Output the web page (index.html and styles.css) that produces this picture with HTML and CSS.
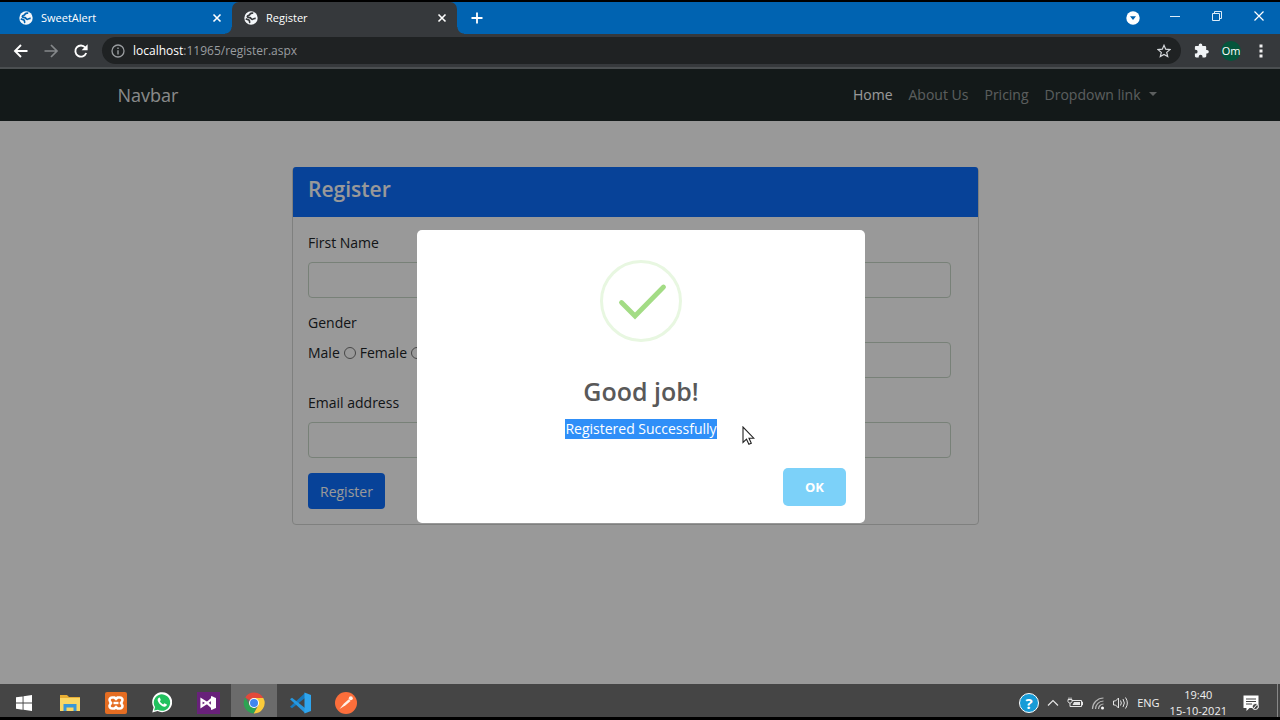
FILE: index.html
```html
<!DOCTYPE html>
<html lang="en">
<head>
<meta charset="utf-8">
<meta name="viewport" content="width=device-width, initial-scale=1">
<title>Register</title>
<link rel="stylesheet" href="styles.css">
</head>
<body>

<svg class="defs" width="0" height="0">
  <symbol id="globe" viewBox="0 0 14 14">
    <circle cx="7" cy="7" r="6.700" fill="#f4f7fa"/>
    <path class="land" d="M9.300 2.300c-1.600-.5-3.300.2-3.500 1.300-.1.900-2.300.6-2.500 1.900-.1 1.100 1.500 1 2.600 1.200 1.200.2 1 1.500 2.200 1.600 1.300.1 1.500-1.100 3.600-1"/>
    <path class="land" d="M1.900 7.600c1.200 1.400 2.700.7 3.300 1.700.6.900-.2 1.500.9 2.500"/>
  </symbol>
</svg>

<div class="tabs">
  <div class="tab">
    <svg width="14" height="14"><use href="#globe"/></svg>
    <span>SweetAlert</span>
    <button class="tab-close" aria-label="Close tab"><svg width="10" height="10" viewBox="0 0 10 10"><path d="M1.500 1.500l7 7M8.500 1.500l-7 7" stroke="#fff" stroke-width="1.600"/></svg></button>
  </div>
  <div class="tab active">
    <svg width="14" height="14"><use href="#globe"/></svg>
    <span>Register</span>
    <button class="tab-close" aria-label="Close tab"><svg width="10" height="10" viewBox="0 0 10 10"><path d="M1.500 1.500l7 7M8.500 1.500l-7 7" stroke="#fff" stroke-width="1.600"/></svg></button>
  </div>
  <button class="new-tab" aria-label="New tab"><svg width="12" height="12" viewBox="0 0 12 12"><path d="M6 .5v11M.5 6h11" stroke="#fff" stroke-width="1.800"/></svg></button>
  <div class="window-buttons">
    <button aria-label="Search tabs"><svg width="14" height="18" viewBox="0 0 14 18"><circle cx="7" cy="11" r="6.700" fill="#fff"/><path d="M4 9.300h6L7 13z" fill="#0063b1"/></svg></button>
    <button aria-label="Minimize"><svg width="10" height="10" viewBox="0 0 10 10"><path d="M0 5.500h10" stroke="#dcecf8"/></svg></button>
    <button aria-label="Restore"><svg width="10" height="10" viewBox="0 0 10 10"><path d="M.5 2.500h7v7h-7zM2.500 2.500v-2h7v7h-2" fill="none" stroke="#dcecf8"/></svg></button>
    <button aria-label="Close"><svg width="10" height="10" viewBox="0 0 10 10"><path d="M.5.5l9 9M9.500.5l-9 9" stroke="#fff" stroke-width="1.200"/></svg></button>
  </div>
</div>

<div class="toolbar">
  <button aria-label="Back"><svg width="16" height="16" viewBox="0 0 16 16"><path d="M14.500 8H2M8 2L2 8l6 6" fill="none" stroke="#fff" stroke-width="1.900"/></svg></button>
  <button aria-label="Forward"><svg width="16" height="16" viewBox="0 0 16 16"><path d="M1.500 8H14M8 2l6 6-6 6" fill="none" stroke="#85888b" stroke-width="1.700"/></svg></button>
  <button aria-label="Reload"><svg width="16" height="16" viewBox="0 0 16 16"><path d="M13.200 10A5.600 5.600 0 1 1 12.300 4.500" fill="none" stroke="#fff" stroke-width="1.900"/><path d="M14.600 1.200v6H8.600z" fill="#fff"/></svg></button>
  <div class="address">
    <svg width="14" height="14" viewBox="0 0 14 14"><circle cx="7" cy="7" r="6" fill="none" stroke="#9a9da0" stroke-width="1.300"/><path d="M7 6.200v4.300M7 3.500v1.400" stroke="#9a9da0" stroke-width="1.400"/></svg>
    <span class="url"><b>localhost</b>:11965/register.aspx</span>
    <button class="star" aria-label="Bookmark"><svg width="14" height="14" viewBox="0 0 14 14"><path d="M7 1.300l1.700 3.900 4.200.4-3.200 2.800 1 4.200L7 10.400l-3.700 2.200 1-4.200L1.100 5.600l4.200-.4z" fill="none" stroke="#d6d9dc" stroke-width="1.200"/></svg></button>
  </div>
  <button aria-label="Extensions"><svg width="15" height="15" viewBox="0 0 15 15"><path d="M13 7h-.8V4.300c0-.8-.6-1.300-1.300-1.300H8.300v-.700a1.800 1.800 0 0 0-3.600 0V3H2.200C1.400 3 .9 3.500.9 4.300v2.500h.8a1.900 1.900 0 0 1 0 3.800H.9v2.500c0 .8.6 1.300 1.300 1.300h2.500v-.800a1.900 1.900 0 0 1 3.800 0v.8H11c.700 0 1.300-.6 1.300-1.300v-2.500h.7A1.800 1.800 0 0 0 13 7z" fill="#f0f3f6"/></svg></button>
  <button class="avatar" aria-label="Profile">Om</button>
  <button aria-label="Menu"><svg width="4" height="14" viewBox="0 0 4 14"><path d="M.5.5h3v3h-3zM.5 5.500h3v3h-3zM.5 10.500h3v3h-3z" fill="#f0f0f0"/></svg></button>
</div>

<div class="viewport">
  <nav class="navbar">
    <div class="container">
      <a class="navbar-brand" href="#">Navbar</a>
      <a class="nav-link current" href="#">Home</a>
      <a class="nav-link" href="#">About Us</a>
      <a class="nav-link" href="#">Pricing</a>
      <a class="nav-link dropdown" href="#">Dropdown link</a>
    </div>
  </nav>

  <main>
    <form class="card">
      <h4>Register</h4>
      <div class="card-body">
        <div class="row">
          <div class="field">
            <label for="fname">First Name</label>
            <input type="text" id="fname" name="fname">
          </div>
          <div class="field">
            <input type="text" name="lname" aria-label="Last Name">
          </div>
          <div class="field">
            <span class="label">Gender</span>
            <div class="radios">
              <label for="male">Male</label> <input type="radio" id="male" name="gender">
              <label for="female">Female</label> <input type="radio" id="female" name="gender">
            </div>
          </div>
          <div class="field">
            <input type="text" name="phone" aria-label="Phone">
          </div>
          <div class="field">
            <label for="email">Email address</label>
            <input type="email" id="email" name="email">
          </div>
          <div class="field">
            <input type="password" name="psw" aria-label="Password">
          </div>
        </div>
        <button type="submit" class="registerbtn">Register</button>
      </div>
    </form>
  </main>

  <!-- alert shown after sign up -->
  <div class="overlay">
    <div class="modal" role="dialog" aria-labelledby="modal-title">
      <svg class="modal-icon" width="82" height="82" viewBox="0 0 82 82">
        <circle cx="41" cy="41" r="39.500" fill="none" stroke="#e8f7e1" stroke-width="3"/>
        <path d="M21.500 42.500L35 56l28.500-29" fill="none" stroke="#a3dc85" stroke-width="4.800" stroke-linecap="round"/>
      </svg>
      <h2 id="modal-title">Good job!</h2>
      <p><span class="selected">Registered Successfully</span></p>
      <div class="modal-footer">
        <button class="okbtn">OK</button>
      </div>
      <svg class="cursor" width="13" height="20" viewBox="0 0 13 20"><path d="M1 1v15.500l3.500-3.300 2.400 5.100 2.400-1.100-2.300-5h4.800z" fill="#fff" stroke="#222" stroke-width="1.100"/></svg>
    </div>
  </div>
</div>

<div class="taskbar">
  <button class="start" aria-label="Start"><svg width="16" height="16" viewBox="0 0 16 16"><path d="M0 2.300L6.600 1.400v6.200H0zM7.500 1.300L16 .1v7.500H7.500zM0 8.500h6.600v6.200L0 13.800zM7.500 8.500H16V16l-8.500-1.200z" fill="#fff"/></svg></button>
  <button aria-label="File Explorer"><svg width="20" height="18" viewBox="0 0 20 18"><path d="M0 1h7l2 2h11v14H0z" fill="#e8ae34"/><path d="M0 4h20v13H0z" fill="#fbd765"/><path d="M3.500 10h13v7h-3v-3.500h-7V17h-3z" fill="#3b97d8"/></svg></button>
  <button aria-label="XAMPP"><svg width="22" height="22" viewBox="0 0 22 22"><rect width="22" height="22" rx="2" fill="#e56d22"/><path d="M7 5.500h2.500L11 7l1.500-1.500H15a2.500 2.500 0 0 1 2 4L16 11l1 1.500a2.500 2.500 0 0 1-2 4h-2.500L11 15l-1.500 1.500H7a2.500 2.500 0 0 1-2-4L6 11 5 9.500a2.500 2.500 0 0 1 2-4z" fill="none" stroke="#fff" stroke-width="2.600"/><path d="M8.500 11h5" stroke="#fff" stroke-width="2.400"/></svg></button>
  <button aria-label="WhatsApp"><svg width="20" height="21" viewBox="0 0 20 21"><path d="M.3 20.500l1.300-5.200A10 10 0 1 1 5.500 19z" fill="#fff"/><path d="M2.100 18.600l1-3.500A8.200 8.200 0 1 1 5.900 17.700z" fill="#22c15e"/><path d="M6.900 5.700c-1.400.8-1.600 2.400-.7 4 1.500 2.800 3.500 4.500 6 5 1.500.2 2.600-.7 2.700-2.200l-2.500-1.300-1.200 1.300c-1.600-.7-2.600-1.800-3.300-3.200l.9-1.200-1-2.500z" fill="#fff"/></svg></button>
  <button aria-label="Visual Studio"><svg width="23" height="22" viewBox="0 0 23 22"><rect width="23" height="22" fill="#68217a"/><path d="M4.500 7.500v7l5.500-3.700 5 4.400V6.600l-5 4.400z" fill="none" stroke="#fff" stroke-width="2.200"/><path d="M14 4l5 2v10l-5 2z" fill="#fff"/></svg></button>
  <button class="running" aria-label="Chrome"><svg width="22" height="22" viewBox="0 0 22 22"><path d="M11 11L2.200 5.500A10.400 10.400 0 0 1 20.300 6H11z" fill="#e2493b"/><path d="M11 6h9.300A10.400 10.400 0 0 1 10.600 21.400L15.300 13.500z" fill="#fbcb3a"/><path d="M2.200 5.500L6.700 13.500 11 16l2.500-.3-2.900 5.700A10.400 10.400 0 0 1 2.200 5.500z" fill="#2da352"/><circle cx="11" cy="11" r="5" fill="#fff"/><circle cx="11" cy="11" r="4" fill="#3f85ee"/></svg></button>
  <button aria-label="VS Code"><svg width="22" height="22" viewBox="0 0 22 22"><path d="M16 1v5L3 16.300 1 14.700z" fill="#1679bd"/><path d="M16 21v-5L3 5.700 1 7.300z" fill="#2798df"/><path d="M15.500.5L22 3v16l-6.500 2.500z" fill="#2fa5ed"/></svg></button>
  <button aria-label="Postman"><svg width="22" height="22" viewBox="0 0 22 22"><circle cx="11" cy="11" r="11" fill="#fb6e3b"/><path d="M4.500 17l4.500-5.500 4.800-4.300 1.800 1.700-5 4.400z" fill="#fff1e8"/><circle cx="15.800" cy="6.300" r="2" fill="#fff1e8"/></svg></button>

  <div class="tray">
    <button class="help" aria-label="Help">?</button>
    <svg width="12" height="12" viewBox="0 0 12 12"><path d="M1 8.500l5-5 5 5" fill="none" stroke="#e4e4e4" stroke-width="1.200"/></svg>
    <svg width="16" height="12" viewBox="0 0 16 12"><path d="M5 3.500h9.500v6H4M14.500 5h1v3h-1" fill="none" stroke="#e4e4e4"/><path d="M7 5h6v3H5.500z" fill="#e4e4e4"/><path d="M1 2.500h4v2.200L3.800 6H2.200L1 4.700zM2 .5v2M4 .5v2M3 6v3.500h2" fill="none" stroke="#e4e4e4"/></svg>
    <svg width="14" height="14" viewBox="0 0 14 14"><path d="M1.500 13A11 11 0 0 1 12.500 2M4.500 13a8 8 0 0 1 8-8M7.500 13a5 5 0 0 1 5-5" fill="none" stroke="#b5b5b5" stroke-width="1.200"/><circle cx="11.500" cy="12" r="1.500" fill="#fff"/></svg>
    <svg width="16" height="14" viewBox="0 0 16 14"><path d="M.5 5h2l3-3v10l-3-3h-2zM7.500 4.500q1.700 2.500 0 5M10 3q2.700 4 0 8M12.500 1.500q3.700 5.500 0 11" fill="none" stroke="#e4e4e4"/></svg>
    <span>ENG</span>
    <div class="clock">19:40<br>15-10-2021</div>
    <svg width="16" height="16" viewBox="0 0 16 16"><path d="M.5.5h15V13H6.500L3.500 16v-3h-3z" fill="#fff"/><path d="M3 4h10M3 6.500h10M3 9h6" stroke="#444"/><circle cx="12.300" cy="11.500" r="3" fill="#444" stroke="#fff"/><path d="M10.500 13.500l3.500-4" stroke="#fff"/></svg>
  </div>
</div>

</body>
</html>
```

FILE: styles.css
```css
* {
  box-sizing: border-box;
}

body {
  margin: 0;
  min-height: 100vh;
  display: flex;
  flex-direction: column;
  border-top: 2px solid #000;
  border-bottom: 3px solid #000;
  background: #000;
  font-family: "Open Sans", "Noto Sans", sans-serif;
  font-size: 14px;
  line-height: 22px;
}

button {
  border: none;
  padding: 0;
  background: none;
  color: white;
  font-family: inherit;
}

a {
  text-decoration: none;
}

svg {
  display: block;
  flex-shrink: 0;
}

.defs {
  position: absolute;
}

/* browser tabs */
.tabs {
  --tab-color: #0063b1;
  display: flex;
  height: 32px;
  background: #0063b1;
  color: white;
  font-size: 11px;
}

.tab {
  position: relative;
  display: flex;
  align-items: center;
  gap: 8px;
  width: 225px;
  padding: 0 10px 0 12px;
}

.tab:first-child {
  width: 232px;
  padding-left: 19px;
}

.tab.active {
  --tab-color: #36393c;
  background: #36393c;
  border-radius: 7px 7px 0 0;
}

.tab.active::before,
.tab.active::after {
  content: "";
  position: absolute;
  bottom: 0;
  width: 7px;
  height: 7px;
}

.tab.active::before {
  left: -7px;
  background: radial-gradient(circle at 0 0, transparent 6px, #36393c 7px);
}

.tab.active::after {
  right: -7px;
  background: radial-gradient(circle at 100% 0, transparent 6px, #36393c 7px);
}

.land {
  fill: none;
  stroke: var(--tab-color);
  stroke-width: 1.7;
}

.tab-close {
  margin-left: auto;
}

.new-tab {
  width: 40px;
  display: grid;
  place-items: center;
}

.window-buttons {
  display: flex;
  margin-left: auto;
  height: 27px;
}

.window-buttons button {
  width: 42px;
  display: grid;
  place-items: center;
}

/* address bar row */
.toolbar {
  display: flex;
  align-items: center;
  height: 35px;
  padding: 0 4px 0 6px;
  background: #36393c;
  border-bottom: 2px solid #4b4f51;
}

.toolbar > button {
  width: 30px;
  display: grid;
  place-items: center;
}

.address {
  flex: 1;
  display: flex;
  align-items: center;
  gap: 8px;
  height: 27px;
  margin: 0 5px 0 6px;
  padding: 0 10px 0 9px;
  border-radius: 14px;
  background: #1f2223;
  color: #9a9da0;
  font-size: 12px;
}

.url b {
  color: white;
  font-weight: normal;
}

.star {
  margin-left: auto;
}

.toolbar .avatar {
  width: 20px;
  height: 20px;
  margin: 0 5px;
  border-radius: 50%;
  background: #05553c;
  font-size: 11px;
}

/* page */
.viewport {
  flex: 1;
  position: relative;
  background: white;
  color: #212529;
}

.navbar {
  background: #212b2b;
}

.container {
  display: flex;
  align-items: center;
  max-width: 1069px;
  height: 52px;
  margin: 0 auto;
  padding: 0 10px 0 12px;
}

.navbar-brand {
  margin-right: auto;
  color: rgba(255, 255, 255, 0.9);
  font-size: 18px;
}

.nav-link {
  padding: 8px;
  color: rgba(255, 255, 255, 0.55);
}

.nav-link.current {
  color: white;
}

.dropdown::after {
  content: "";
  display: inline-block;
  margin-left: 8px;
  vertical-align: 4px;
  border-top: 4px solid;
  border-left: 4px solid transparent;
  border-right: 4px solid transparent;
}

main {
  padding: 46px 9px 24px 0;
}

.card {
  max-width: 687px;
  margin: 0 auto;
  border: 1px solid #d4d6d4;
  border-radius: 4px;
}

.card h4 {
  margin: -1px 0 0;
  padding: 8px 15px 14px;
  border-radius: 3px 3px 0 0;
  background: #0d6efd;
  color: white;
  font-size: 21px;
  font-weight: 600;
  line-height: 28px;
}

.card-body {
  padding: 15px;
}

.row {
  display: grid;
  grid-template-columns: 1fr 1fr;
  gap: 14px 24px;
  padding-right: 12px;
}

.field {
  display: flex;
  flex-direction: column;
  justify-content: flex-end;
  gap: 8px;
  height: 66px;
}

.field > input {
  height: 36px;
  width: 100%;
  border: 1px solid #c8d8c8;
  border-radius: 4px;
  background: white;
}

.radios {
  height: 36px;
  display: flex;
  align-items: flex-start;
  gap: 4px;
}

.radios input {
  width: 12px;
  height: 12px;
  margin: 5px 0;
}

.registerbtn {
  display: block;
  height: 36px;
  margin-top: 15px;
  padding: 0 12px;
  border-radius: 4px;
  background: #0d6efd;
  font-size: 14px;
}

/* alert */
.overlay {
  position: absolute;
  inset: 0;
  display: grid;
  place-items: center;
  padding-left: 2px;
  background: rgba(0, 0, 0, 0.4);
}

.modal {
  position: relative;
  width: 448px;
  max-width: 100%;
  padding: 30px 19px 17px;
  border-radius: 5px;
  background: white;
  text-align: center;
}

.modal-icon {
  margin: 0 auto;
}

.modal h2 {
  margin: 33px 0 12px;
  color: #595959;
  font-size: 25px;
  font-weight: 600;
  line-height: 32px;
}

.modal p {
  margin: 0 0 29px;
  line-height: 20px;
}

.selected {
  display: inline-block;
  background: #2f8ff8;
  color: white;
}

.modal-footer {
  text-align: right;
}

.okbtn {
  display: inline-block;
  width: 63px;
  height: 38px;
  border-radius: 5px;
  background: #7cd1f9;
  font-size: 13px;
  font-weight: bold;
  vertical-align: top;
}

.cursor {
  position: absolute;
  left: 325px;
  top: 196px;
}

/* windows taskbar */
.taskbar {
  display: flex;
  height: 33px;
  background: #454545;
  color: #f0f0f0;
}

.taskbar > button {
  width: 46px;
  padding-top: 4px;
  display: grid;
  place-items: center;
}

.taskbar .start {
  width: 47px;
}

.taskbar .running {
  background: #6b6b6b;
}

.tray {
  display: flex;
  align-items: center;
  gap: 8px;
  margin-left: auto;
  padding: 5px 18px 0 0;
  margin-right: 2px;
  border-right: 1px solid #888;
  font-size: 11px;
}

.help {
  width: 20px;
  height: 20px;
  border: 1px solid white;
  border-radius: 50%;
  background: #179bd7;
  font-size: 15px;
  font-weight: bold;
  line-height: 18px;
}

.clock {
  padding: 0 8px 0 2px;
  text-align: center;
  line-height: 16px;
}
```
